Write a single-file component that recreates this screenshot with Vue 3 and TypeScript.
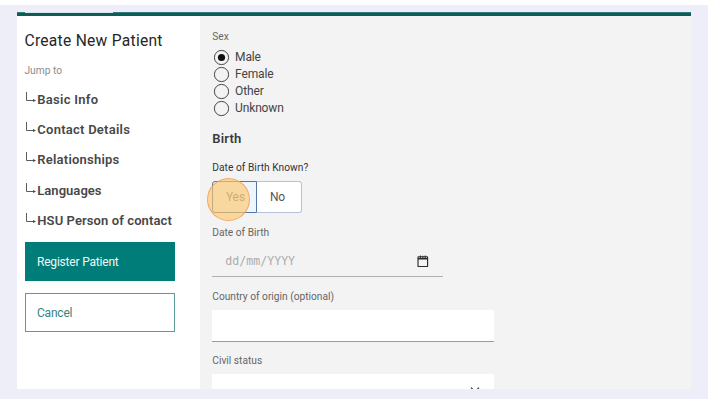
<script setup lang="ts">
import { ref } from 'vue'

interface Section { label: string; cls: string }

const sections: Section[] = [
  { label: 'Basic Info', cls: 's-basic' },
  { label: 'Contact Details', cls: 's-contact' },
  { label: 'Relationships', cls: 's-rel' },
  { label: 'Languages', cls: 's-lang' },
  { label: 'HSU Person of contact', cls: 's-hsu' },
]
const sexes: string[] = ['Male', 'Female', 'Other', 'Unknown']
const sex = ref<string>('Male')
</script>

<template>
  <div class="backdrop">
    <div class="window">
      <header class="topbar"><i class="notch"></i></header>
      <div class="body">
        <aside class="side">
          <h1><span>Create New Patient</span></h1>
          <p class="jump"><span>Jump to</span></p>
          <nav>
            <a v-for="s in sections" :key="s.label">
              <svg class="arrow" width="12" height="14" viewBox="0 0 12 14" fill="none" stroke="#4a4a4a">
                <path d="M1.5 1V9.5H9.6" stroke-width=".9" />
                <path d="M8 7.9L11 9.5L8 11.1Z" fill="#4a4a4a" stroke="none" />
              </svg>
              <span :class="s.cls">{{ s.label }}</span>
            </a>
          </nav>
          <button class="btn primary"><span>Register Patient</span></button>
          <button class="btn outline"><span>Cancel</span></button>
        </aside>
        <main class="form">
          <div class="label sex"><span>Sex</span></div>
          <div class="radios">
            <div v-for="s in sexes" :key="s" class="radio" @click="sex = s">
              <svg width="17" height="17" viewBox="0 0 17 17">
                <circle cx="8.5" cy="8.5" r="7.1" fill="none" stroke="#3c3c3c" stroke-width=".95" />
                <circle v-if="sex === s" cx="8.5" cy="8.5" r="3.6" fill="#111" />
              </svg>
              <span>{{ s }}</span>
            </div>
          </div>
          <h2><span>Birth</span></h2>
          <div class="label known"><span>Date of Birth Known?</span></div>
          <div class="toggle">
            <div class="opt yes"><span>Yes</span></div>
            <div class="opt no"><span>No</span></div>
            <i class="pointer"></i>
          </div>
          <div class="label dob"><span>Date of Birth</span></div>
          <div class="date">
            <span>dd/mm/YYYY</span>
            <svg width="12" height="13" viewBox="0 0 12 13" fill="none" stroke="#2b2b2b">
              <rect x="1" y="1.7" width="9.6" height="9.8" rx=".6" stroke-width="1.15" />
              <path d="M1 3.7H10.6" stroke-width="1.6" />
              <path d="M3.4 .5V3M5.8 .8V3M8.2 .5V3" stroke-width="1" />
            </svg>
          </div>
          <div class="label country"><span>Country of origin (optional)</span></div>
          <div class="field"></div>
          <div class="label civil"><span>Civil status</span></div>
          <div class="field select">
            <svg width="10" height="6" viewBox="0 0 10 6" fill="none" stroke="#333" stroke-width="1.2">
              <path d="M1 .6L5 4.6L9 .6" />
            </svg>
          </div>
        </main>
      </div>
    </div>
  </div>
</template>

<style>
body { background: #fff; overflow: hidden; }
</style>

<style scoped>
* { box-sizing: border-box; }
.backdrop {
  width: 708px; height: 394px; margin-top: 5px; padding: 7px 17px 10px;
  background: #eeeef8; font-family: Roboto, "Liberation Sans", sans-serif;
  overflow: hidden;
}
.window { height: 377px; overflow: hidden; background: #f3f3f3; }
.topbar { height: 4px; background: #0f5b58; border-top: 1px solid #327c79; display: flex; }
.notch { width: 88px; height: 1px; margin: -1px 0 0 8px; background: #d9e5e6; }
.body { display: flex; height: 373px; }
.side { width: 183px; flex: none; background: #fff; padding: 15px 0 0 7.5px; }
span { display: inline-block; white-space: nowrap; }
h1 { margin: 0; height: 20px; line-height: 20px; font-size: 15.6px; font-weight: 400; color: #262626; letter-spacing: .27px; }
.jump { margin: 12px 0 0; height: 16px; line-height: 16px; font-size: 10.2px; color: #8b8b8b; letter-spacing: 0; }
nav { padding-top: 4.9px; }
nav a { display: flex; height: 30.4px; align-items: center; font-size: 13px; font-weight: 600; color: #484848; }
.arrow { flex: none; margin-top: -3px; }
nav a span { margin-left: .8px; }
.s-basic { letter-spacing: .28px; }
.s-contact { letter-spacing: .25px; }
.s-rel { letter-spacing: .22px; }
.s-lang { letter-spacing: .03px; }
.s-hsu { letter-spacing: .1px; }
.btn { display: flex; width: 150px; height: 39px; padding: 0 11.5px; align-items: center; font: 400 12px Roboto, sans-serif; border: 1px solid #007d79; letter-spacing: -.2px; }
.primary { margin-top: 6.3px; background: #007d79; color: #eef8f7; }
.outline { margin-top: 12px; background: #fff; border-color: #5c9c98; color: #38827d; }
.form { flex: 1; padding-left: 12.3px; padding-top: 14px; }
.label { height: 14px; line-height: 14px; font-size: 10.2px; color: #666; letter-spacing: 0; }
.radios { padding-top: 5px; }
.radio { display: flex; height: 16.9px; align-items: center; font-size: 12px; color: #444; letter-spacing: -.15px; }
.radio svg { flex: none; margin: 0 5px 0 .8px; }
.radio span { margin-top: -1px; }
h2 { margin: 12.4px 0 0; height: 20px; line-height: 20px; font-size: 13px; font-weight: 600; color: #3a3a3a; letter-spacing: .2px; }
.known { margin-top: 12px; color: #333; letter-spacing: .04px; }
.toggle { position: relative; display: flex; width: 90px; height: 32px; margin-top: 6px; font-size: 12px; color: #555; letter-spacing: -.1px; }
.opt { display: flex; align-items: center; width: 45px; padding-left: 12.6px; border: 1px solid #b6c0da; background: #fff; }
.yes { border-color: #5475a2; border-radius: 3px 0 0 3px; background: #edf5ff; color: #777; }
.no { border-left: 0; border-radius: 0 3px 3px 0; }
.pointer { position: absolute; left: -5.8px; top: -3.2px; width: 43.5px; height: 43.5px; border-radius: 50%; background: rgba(255, 200, 107, .65); border: 1.5px solid rgba(240, 145, 75, .68); }
.dob { margin-top: 13px; }
.date { display: flex; justify-content: space-between; align-items: center; width: 230.5px; height: 33px; margin-top: 4.5px; padding: 2px 13.5px 0 13px; border-bottom: 1px solid #b0b0b0; font: 11.6px "DejaVu Sans Mono", monospace; color: #adadad; }
.country { margin-top: 12.5px; }
.field { width: 282px; height: 32px; margin-top: 6px; background: #fff; border-bottom: 1px solid #9b9b9b; }
.civil { margin-top: 12px; }
.select { display: flex; justify-content: flex-end; padding: 13.3px 14px 0 0; }
</style>
